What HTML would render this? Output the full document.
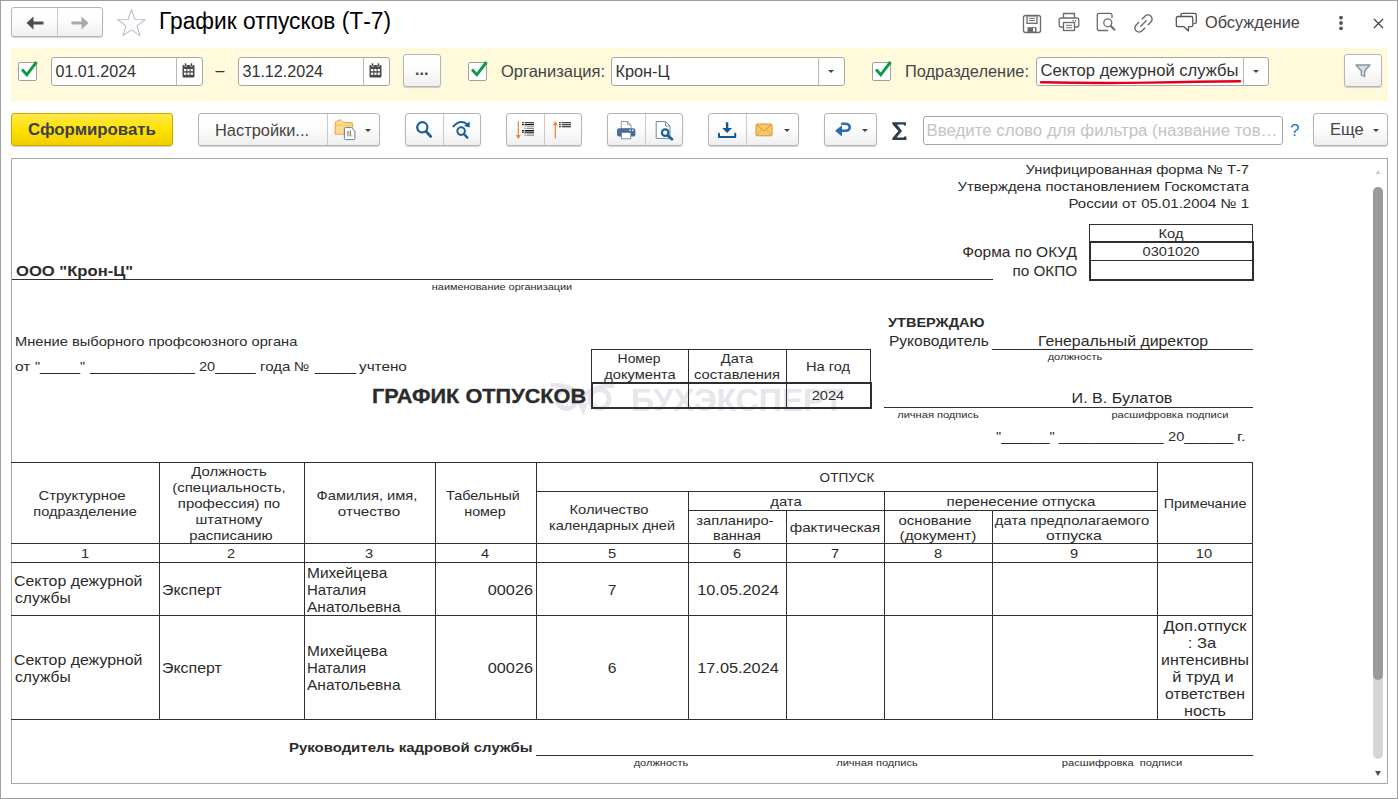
<!DOCTYPE html>
<html lang="ru">
<head>
<meta charset="utf-8">
<title>График отпусков (Т-7)</title>
<style>
*{box-sizing:border-box;margin:0;padding:0}
html,body{width:1398px;height:799px;overflow:hidden;background:#fff}
body{position:relative;font-family:"Liberation Sans",sans-serif;font-size:16.3px;color:#333}
.abs,.btn,.inp,.cb,.t,.hl,.vl,svg.i{position:absolute}
.win{left:0;top:0;width:1398px;height:799px;border:1px solid #9e9e9e}
.t{white-space:pre;line-height:1}
.btn{border:1px solid #b5b5b5;border-radius:3px;background:linear-gradient(#ffffff 0%,#fdfdfd 45%,#efefef 100%);box-shadow:0 1px 1px rgba(0,0,0,.18)}
.btn .dv{position:absolute;top:0;bottom:0;width:1px;background:#c9c9c9}
.inp{border:1px solid #a6a6a6;border-radius:3px;background:#fff}
.inp .dv{position:absolute;top:0;bottom:0;width:1px;background:#b9b9b9}
.cb{width:19px;height:19px;border:1px solid #a0a0a0;border-radius:2px;background:#fff}
.arr{position:absolute;width:0;height:0;border-left:3px solid transparent;border-right:3px solid transparent;border-top:3px solid #444}
.band{left:11px;top:48px;width:1377px;height:54px;background:#fffadc}
.hl{height:1px;background:#2a2a2a}
.vl{width:1px;background:#2a2a2a}
.d{position:absolute;white-space:pre;color:#2b2b2b;line-height:1}
.c{text-align:center}
.r{text-align:right}
</style>
</head>
<body>
<div class="abs win"></div>

<!-- ===== title bar ===== -->
<div class="btn" style="left:11px;top:7px;width:92px;height:30px">
  <div class="dv" style="left:45px"></div>
  <svg class="i" style="left:14px;top:8px" width="18" height="14" viewBox="0 0 18 14"><path d="M0.5 7 L7.5 0.6 V5.5 H17.5 V8.5 H7.5 V13.4 Z" fill="#4d4d4d"/></svg>
  <svg class="i" style="left:59px;top:8px" width="18" height="14" viewBox="0 0 18 14"><path d="M17.5 7 L10.5 0.6 V5.5 H0.5 V8.5 H10.5 V13.4 Z" fill="#a9a9a9"/></svg>
</div>
<svg class="i" style="left:116px;top:7.5px" width="31" height="29.5" viewBox="0 0 30 28"><path d="M15 1.5 L18.3 10.8 L28.2 11 L20.3 17 L23.2 26.4 L15 20.8 L6.8 26.4 L9.7 17 L1.8 11 L11.7 10.8 Z" fill="#fff" stroke="#b3bcc6" stroke-width="1"/></svg>
<div class="t" style="left:158.5px;top:10px;font-size:23.3px;color:#000;transform:scaleX(.977);transform-origin:0 0">График отпусков (Т-7)</div>

<!-- right icons -->
<svg class="i" style="left:1021.5px;top:14px" width="20" height="20" viewBox="0 0 20 20" fill="none" stroke="#6b6b6b" stroke-width="1.3"><path d="M1.5 3.5 Q1.5 1.5 3.5 1.5 H16.5 Q18.5 1.5 18.5 3.5 V16.5 Q18.5 18.5 16.5 18.5 H3.5 Q1.5 18.5 1.5 16.5 Z"/><rect x="5" y="1.8" width="10" height="7.5"/><path d="M7 4.3 H13 M7 6.6 H13" stroke-width="1"/><rect x="5.5" y="13.2" width="9" height="5.2" fill="#6b6b6b" stroke="none"/><rect x="11" y="14.2" width="2" height="3.2" fill="#fff" stroke="none"/></svg>
<svg class="i" style="left:1058px;top:12px" width="22" height="20" viewBox="0 0 22 20" fill="none" stroke="#6b6b6b" stroke-width="1.3"><path d="M5.5 6 V1.5 H16.5 V6"/><path d="M5.5 15 H3.2 Q1.2 15 1.2 13 V8 Q1.2 6 3.2 6 H18.8 Q20.8 6 20.8 8 V13 Q20.8 15 18.8 15 H16.5"/><rect x="5.5" y="10.5" width="11" height="8"/><path d="M8 13.3 H14 M8 15.8 H14" stroke-width="1"/><circle cx="17.6" cy="8.7" r="0.8" fill="#6b6b6b" stroke="none"/><circle cx="15.2" cy="8.7" r="0.8" fill="#6b6b6b" stroke="none"/></svg>
<svg class="i" style="left:1096px;top:12px" width="21" height="21" viewBox="0 0 21 21" fill="none" stroke="#6b6b6b" stroke-width="1.3"><path d="M12 18.5 H3 Q1.3 18.5 1.3 16.8 V3 Q1.3 1.3 3 1.3 H14.3 Q16 1.3 16 3 V6"/><circle cx="11.8" cy="10.8" r="4"/><path d="M14.6 13.8 L19 18.3" stroke-width="2"/></svg>
<svg class="i" style="left:1132px;top:12px" width="23" height="23" viewBox="0 0 23 23" fill="none" stroke="#6b6b6b" stroke-width="1.4" stroke-linecap="round"><g transform="rotate(-45 11.5 11.5)"><path d="M9.2 7.3 H5.3 A4.2 4.2 0 0 0 5.3 15.7 H9.2"/><path d="M13.8 7.3 H17.7 A4.2 4.2 0 0 1 17.7 15.7 H13.8"/><path d="M7.6 11.5 H15.4"/></g></svg>
<svg class="i" style="left:1175px;top:12px" width="23" height="21" viewBox="0 0 23 21" fill="none" stroke="#555" stroke-width="1.3" stroke-linejoin="round"><path d="M6 4 V3 Q6 1.3 7.7 1.3 H19.5 Q21.3 1.3 21.3 3 V10 Q21.3 11.7 19.5 11.7 H18.5"/><path d="M3 4.5 H16 Q17.8 4.5 17.8 6.2 V13 Q17.8 14.7 16 14.7 H13.5 L13.5 19 L9 14.7 H3 Q1.3 14.7 1.3 13 V6.2 Q1.3 4.5 3 4.5 Z"/></svg>
<div class="t" style="left:1205px;top:14px;font-size:16.3px;color:#444">Обсуждение</div>
<svg class="i" style="left:1338px;top:15px" width="6" height="16" viewBox="0 0 6 16" fill="#555"><circle cx="3" cy="2.7" r="1.9"/><circle cx="3" cy="8" r="1.9"/><circle cx="3" cy="13.3" r="1.9"/></svg>
<svg class="i" style="left:1373px;top:18px" width="11" height="11" viewBox="0 0 11 11" stroke="#444" stroke-width="1.3"><path d="M1 1 L10 10 M10 1 L1 10"/></svg>

<!-- ===== filter band ===== -->
<div class="abs band"></div>
<div class="cb" style="left:18px;top:62px"></div>
<svg class="i" style="left:20px;top:60px" width="18" height="18" viewBox="0 0 18 18" fill="none" stroke="#0a9a4a" stroke-width="2.9"><path d="M2 9.5 L6.8 14.8 L16.5 2"/></svg>
<div class="inp" style="left:51px;top:57px;width:152px;height:29px"><div class="dv" style="left:124px"></div></div>
<div class="t" style="left:55.5px;top:63px;font-size:16.1px">01.01.2024</div>
<svg class="i cal" style="left:182px;top:63px" width="13" height="15" viewBox="0 0 13 15"><path d="M0.5 3 Q0.5 2 1.5 2 H11.5 Q12.5 2 12.5 3 V13.5 Q12.5 14.5 11.5 14.5 H1.5 Q0.5 14.5 0.5 13.5 Z" fill="#4a4a4a"/><rect x="2.5" y="0" width="2.2" height="3.6" rx="1" fill="#4a4a4a" stroke="#fdfdfd" stroke-width=".6"/><rect x="8.3" y="0" width="2.2" height="3.6" rx="1" fill="#4a4a4a" stroke="#fdfdfd" stroke-width=".6"/><g fill="#fff"><rect x="2" y="6" width="2.3" height="2.2"/><rect x="5.3" y="6" width="2.3" height="2.2"/><rect x="8.6" y="6" width="2.3" height="2.2"/><rect x="2" y="9.6" width="2.3" height="2.2"/><rect x="5.3" y="9.6" width="2.3" height="2.2"/><rect x="8.6" y="9.6" width="2.3" height="2.2"/></g></svg>
<div class="t" style="left:215.5px;top:63px;font-size:16px">–</div>
<div class="inp" style="left:238px;top:57px;width:152px;height:29px"><div class="dv" style="left:124px"></div></div>
<div class="t" style="left:242.5px;top:63px;font-size:16.1px">31.12.2024</div>
<svg class="i cal" style="left:369px;top:63px" width="13" height="15" viewBox="0 0 13 15"><path d="M0.5 3 Q0.5 2 1.5 2 H11.5 Q12.5 2 12.5 3 V13.5 Q12.5 14.5 11.5 14.5 H1.5 Q0.5 14.5 0.5 13.5 Z" fill="#4a4a4a"/><rect x="2.5" y="0" width="2.2" height="3.6" rx="1" fill="#4a4a4a" stroke="#fdfdfd" stroke-width=".6"/><rect x="8.3" y="0" width="2.2" height="3.6" rx="1" fill="#4a4a4a" stroke="#fdfdfd" stroke-width=".6"/><g fill="#fff"><rect x="2" y="6" width="2.3" height="2.2"/><rect x="5.3" y="6" width="2.3" height="2.2"/><rect x="8.6" y="6" width="2.3" height="2.2"/><rect x="2" y="9.6" width="2.3" height="2.2"/><rect x="5.3" y="9.6" width="2.3" height="2.2"/><rect x="8.6" y="9.6" width="2.3" height="2.2"/></g></svg>
<div class="btn" style="left:403px;top:54px;width:38px;height:33px"></div>
<div class="t" style="left:415px;top:62px;font-size:16px;font-weight:bold;color:#444">...</div>

<div class="cb" style="left:468px;top:62px"></div>
<svg class="i" style="left:470px;top:60px" width="18" height="18" viewBox="0 0 18 18" fill="none" stroke="#0a9a4a" stroke-width="2.9"><path d="M2 9.5 L6.8 14.8 L16.5 2"/></svg>
<div class="t" style="left:501px;top:63px;font-size:16.5px;color:#444">Организация:</div>
<div class="inp" style="left:611px;top:57px;width:234px;height:29px"><div class="dv" style="left:206px"></div><div class="arr" style="left:216px;top:12px"></div></div>
<div class="t" style="left:615.5px;top:63px;font-size:16.3px">Крон-Ц</div>

<div class="cb" style="left:872px;top:62px"></div>
<svg class="i" style="left:874px;top:60px" width="18" height="18" viewBox="0 0 18 18" fill="none" stroke="#0a9a4a" stroke-width="2.9"><path d="M2 9.5 L6.8 14.8 L16.5 2"/></svg>
<div class="t" style="left:905px;top:63px;font-size:16.4px;color:#444">Подразделение:</div>
<div class="inp" style="left:1036px;top:57px;width:233px;height:29px"><div class="dv" style="left:206px"></div><div class="arr" style="left:216px;top:12px"></div></div>
<div class="t" style="left:1040.5px;top:63px;font-size:16.6px">Сектор дежурной службы</div>
<svg class="i" style="left:1038px;top:78px" width="206" height="8" viewBox="0 0 206 8" fill="none" stroke="#e3001b" stroke-width="2.4" stroke-linecap="round"><path d="M3 4.2 Q60 5.6 110 4.6 T202 3.2"/></svg>
<div class="btn" style="left:1344px;top:54px;width:38px;height:33px"></div>
<svg class="i" style="left:1355px;top:64px" width="16" height="14" viewBox="0 0 16 14" fill="#d3dae0" stroke="#8593a0" stroke-width="1.3" stroke-linejoin="round"><path d="M1 1 H15 L9.7 7 V12.5 L6.3 11 V7 Z"/></svg>

<!-- ===== toolbar ===== -->
<div class="btn" style="left:11px;top:113px;width:162px;height:33px;background:linear-gradient(#ffe94d 0%,#ffe100 50%,#f2cf00 100%);border-color:#c9a800"></div>
<div class="t" style="left:28px;top:122px;font-size:16.8px;font-weight:bold;color:#3c3f50">Сформировать</div>

<div class="btn" style="left:198px;top:113px;width:182px;height:33px"><div class="dv" style="left:128px"></div><div class="arr" style="left:166px;top:15px"></div></div>
<div class="t" style="left:215px;top:121.6px;font-size:16.4px;color:#444">Настройки...</div>

<div class="btn" style="left:405px;top:113px;width:76px;height:33px"><div class="dv" style="left:37px"></div></div>
<div class="btn" style="left:506px;top:113px;width:76px;height:33px"><div class="dv" style="left:37px"></div></div>
<div class="btn" style="left:607px;top:113px;width:76px;height:33px"><div class="dv" style="left:37px"></div></div>
<div class="btn" style="left:708px;top:113px;width:91px;height:33px"><div class="dv" style="left:37px"></div><div class="arr" style="left:75px;top:15px"></div></div>
<div class="btn" style="left:824px;top:113px;width:53px;height:33px"><div class="arr" style="left:37px;top:15px"></div></div>
<!-- folder+report icon -->
<svg class="i" style="left:334px;top:119px" width="23" height="22" viewBox="0 0 23 22"><path d="M1.2 4.2 Q1.2 2.2 3 2 L5.2 1 Q6.2 .6 7 1.3 L9.2 3.6 H17.4 Q18.6 3.6 18.6 4.8 V15.2 H1.2 Z" fill="#fbdc8a" stroke="#e0a64a" stroke-width="1"/><path d="M1.7 6.3 H18.2" stroke="#f1c469" stroke-width="1"/><path d="M10.4 9.6 Q10.4 8.6 11.4 8.6 H17.4 L20.9 12 V19.6 Q20.9 20.6 19.9 20.6 H11.4 Q10.4 20.6 10.4 19.6 Z" fill="#fff" stroke="#647e99" stroke-width="1"/><path d="M14 12 V16.3" stroke="#e23b2e" stroke-width="1.1"/><path d="M16.4 11.6 V16.3" stroke="#2e9e3e" stroke-width="1.1"/><path d="M12.6 16.8 H18.6" stroke="#8a8a8a" stroke-width=".8"/></svg>
<!-- magnifier -->
<svg class="i" style="left:414px;top:119px" width="20" height="20" viewBox="0 0 20 20" fill="none" stroke="#1c5f95" stroke-linecap="round"><circle cx="8.3" cy="8.3" r="5.1" stroke-width="2.2"/><path d="M12.3 12.6 L16.6 17.4" stroke-width="2.9"/></svg>
<!-- magnifier with arrow -->
<svg class="i" style="left:451px;top:119px" width="21" height="21" viewBox="0 0 21 21" fill="none" stroke="#1c5f95" stroke-linecap="round"><circle cx="10.1" cy="12.1" r="3.8" stroke-width="2"/><path d="M12.9 15 L16.3 18.6" stroke-width="2.5"/><path d="M2.4 7.4 Q9 -0.2 16.2 5.2" stroke-width="2"/><path d="M18.9 2.6 L18.6 8.4 L13 7 Z" fill="#1c5f95" stroke="none"/></svg>
<!-- expand list -->
<svg class="i" style="left:514px;top:120px" width="22" height="20" viewBox="0 0 22 20"><path d="M4.3 1.2 V17" stroke="#f0803c" stroke-width="1.2"/><path d="M1.7 15 H6.9 L4.3 19 Z" fill="#f0803c"/><g stroke="#111" stroke-width="1.1"><path d="M8 2.7 H9.8 M10.6 2.7 H20"/><path d="M8 4.6 H9.8 M10.6 4.6 H20"/><path d="M8 10.5 H9.8 M10.6 10.5 H20"/><path d="M8 12.1 H9.8 M10.6 12.1 H20"/></g><g stroke="#8a8a8a" stroke-width="1"><path d="M10.4 6.8 H11.8 M12.6 6.8 H20"/><path d="M10.4 8.5 H11.8 M12.6 8.5 H20"/><path d="M10.4 13.8 H11.8 M12.6 13.8 H20"/><path d="M10.4 15.3 H11.8 M12.6 15.3 H20"/></g></svg>
<!-- collapse list -->
<svg class="i" style="left:551px;top:120px" width="22" height="20" viewBox="0 0 22 20"><path d="M4.3 3 V18.6" stroke="#f0803c" stroke-width="1.2"/><path d="M1.7 5.2 H6.9 L4.3 1.2 Z" fill="#f0803c"/><g stroke="#111" stroke-width="1.1"><path d="M8 2.7 H9.8 M10.6 2.7 H20"/><path d="M8 4.7 H9.8 M10.6 4.7 H20"/><path d="M8 6.7 H9.8 M10.6 6.7 H20"/></g></svg>
<!-- printer -->
<svg class="i" style="left:616px;top:120px" width="21" height="20" viewBox="0 0 21 20"><path d="M5.3 9 V1.5 H11.6 L15 4.8 V9 Z" fill="#fff" stroke="#8c9bab" stroke-width="1"/><path d="M11.6 1.5 V4.8 H15" fill="none" stroke="#8c9bab" stroke-width="1"/><path d="M1 10.4 Q1 8.2 3.2 8.2 H17.2 Q19.4 8.2 19.4 10.4 V14.6 Q19.4 16.6 17.4 16.6 H3 Q1 16.6 1 14.6 Z" fill="#4a6d96"/><rect x="5.4" y="12.4" width="9.4" height="6.4" fill="#fff" stroke="#5d7b9e" stroke-width=".8"/><rect x="13.4" y="9.6" width="1.5" height="1.3" fill="#fff"/><rect x="16" y="9.6" width="1.5" height="1.3" fill="#fff"/></svg>
<!-- preview -->
<svg class="i" style="left:655px;top:120px" width="20" height="21" viewBox="0 0 20 21"><path d="M1.2 1.6 H10.6 L15 6 V18.4 H1.2 Z" fill="#fff" stroke="#6f88a3" stroke-width="1"/><path d="M10.6 1.6 V6 H15" fill="none" stroke="#6f88a3" stroke-width="1"/><circle cx="10.2" cy="12.6" r="3.3" fill="#fff" stroke="#1c5f95" stroke-width="2.2"/><path d="M12.8 15.4 L17 19.2" stroke="#1c5f95" stroke-width="2.7" stroke-linecap="round"/></svg>
<!-- download -->
<svg class="i" style="left:717px;top:121px" width="20" height="19" viewBox="0 0 20 19" fill="none" stroke="#0f5a96"><path d="M10.1 1.2 V9" stroke-width="2.4"/><path d="M5.2 7 H15 L10.1 12 Z" fill="#0f5a96" stroke="none"/><path d="M2 12.8 V16 H18.2 V12.8" stroke-width="2" stroke-linejoin="round" stroke-linecap="round"/></svg>
<!-- mail -->
<svg class="i" style="left:755px;top:123px" width="18" height="14" viewBox="0 0 18 14"><rect x="1" y="1" width="16" height="11.8" rx="1.2" fill="#f6c76d" stroke="#d6952a" stroke-width="1"/><path d="M1.6 1.6 L9 8 L16.4 1.6" fill="none" stroke="#d6952a" stroke-width="1"/><path d="M1.6 12.2 L6.8 6.4 M16.4 12.2 L11.2 6.4" stroke="#dfa443" stroke-width=".9"/></svg>
<!-- return arrow -->
<svg class="i" style="left:834px;top:121px" width="19" height="17" viewBox="0 0 19 17" fill="none"><path d="M8.2 2.7 H11 Q15.7 2.7 15.7 6.3 Q15.7 9.8 11.4 9.8 H6.5" stroke="#2a6cb0" stroke-width="2.6" stroke-linecap="round"/><path d="M1 9.8 L8 4.2 V15.4 Z" fill="#2a6cb0"/></svg>
<!-- sigma -->
<svg class="i" style="left:891px;top:121px" width="17" height="20" viewBox="0 0 17 20"><path d="M1.4 1.2 H15 V4.6 H12.8 V3.6 H6 L11 10 L5.6 16.6 H13 V15.4 H15.4 V19 H1.4 V17 L7.4 10 L1.4 3.2 Z" fill="#2c3e50"/></svg>


<div class="inp" style="left:923px;top:116px;width:360px;height:29px"></div>
<div class="t" style="left:926.5px;top:123px;font-size:16.85px;color:#c3c3c3">Введите слово для фильтра (название тов…</div>
<div class="t" style="left:1290px;top:121.6px;font-size:17px;color:#1a76c6">?</div>
<div class="btn" style="left:1313px;top:113px;width:75px;height:33px"><div class="arr" style="left:59px;top:15px"></div></div>
<div class="t" style="left:1330px;top:122px;font-size:16.6px;color:#444">Еще</div>

<!-- ===== document frame ===== -->
<div class="abs" style="left:11px;top:158px;width:1377px;height:626px;border:1px solid #a8a8a8;background:#fff"></div>
<!--DOC-->
<div class="d" style="left:631px;top:384.3px;font-size:32px;font-weight:bold;color:#e6e6ec">БУХЭКСПЕРТ</div>
<svg class="i" style="left:548px;top:380px" width="70" height="40" viewBox="0 0 70 40" fill="none" stroke="#e6e6ec" stroke-width="5"><circle cx="18.5" cy="19" r="9.5"/><circle cx="51.5" cy="19" r="9.5"/><path d="M3 5 Q20 4 35 16 Q50 4 66 6" stroke-width="4.5"/><path d="M30 23 L40 23 L35 36 Z" fill="#e6e6ec" stroke="none"/></svg>
<div class="d" style="top:163.00px;font-size:13px;left:649.10px;width:600px;text-align:right;transform-origin:100% 0;transform:scaleX(1.1313);">Унифицированная форма № Т-7</div>
<div class="d" style="top:180.00px;font-size:13px;left:649.10px;width:600px;text-align:right;transform-origin:100% 0;transform:scaleX(1.1430);">Утверждена постановлением Госкомстата</div>
<div class="d" style="top:197.00px;font-size:13px;left:649.10px;width:600px;text-align:right;transform-origin:100% 0;transform:scaleX(1.1537);">России от 05.01.2004 № 1</div>
<div class="abs" style="left:1089px;top:224px;width:164px;height:18px;border:1px solid #2e2e2e"></div>
<div class="abs" style="left:1089px;top:241px;width:165px;height:40px;border:2px solid #2e2e2e"></div>
<div class="abs" style="left:1090px;top:260px;width:163px;height:1px;background:#2e2e2e"></div>
<div class="d" style="top:226.50px;font-size:13px;left:871.00px;width:600px;text-align:center;transform-origin:50% 0;transform:scaleX(1.1250);">Код</div>
<div class="d" style="top:245.00px;font-size:13px;left:871.00px;width:600px;text-align:center;transform-origin:50% 0;transform:scaleX(1.1250);">0301020</div>
<div class="d" style="top:244.81px;font-size:14.4px;left:477.00px;width:600px;text-align:right;transform-origin:100% 0;transform:scaleX(1.0767);">Форма по ОКУД</div>
<div class="d" style="top:263.81px;font-size:14.4px;left:477.00px;width:600px;text-align:right;transform-origin:100% 0;transform:scaleX(1.0587);">по ОКПО</div>
<div class="d" style="top:264.11px;font-size:14.4px;font-weight:bold;left:15.50px;transform-origin:0 0;transform:scaleX(1.1536);">ООО "Крон-Ц"</div>
<div class="abs" style="left:12px;top:279px;width:981px;height:1px;background:#2e2e2e"></div>
<div class="d" style="top:281.96px;font-size:9.5px;left:202.00px;width:600px;text-align:center;transform-origin:50% 0;transform:scaleX(1.1478);">наименование организации</div>
<div class="d" style="top:335.30px;font-size:13px;left:14.70px;transform-origin:0 0;transform:scaleX(1.1272);">Мнение выборного профсоюзного органа</div>
<div class="d" style="top:360.30px;font-size:13px;left:14.70px;transform-origin:0 0;transform:scaleX(1.2010);">от</div>
<div class="d" style="top:360.30px;font-size:13px;left:35.00px;transform-origin:0 0;transform:scaleX(1.1060);">"_____"</div>
<div class="d" style="top:360.30px;font-size:13px;left:89.70px;transform-origin:0 0;transform:scaleX(1.1149);">_____________</div>
<div class="d" style="top:360.30px;font-size:13px;left:198.50px;transform-origin:0 0;transform:scaleX(1.1200);">20_____</div>
<div class="d" style="top:360.30px;font-size:13px;left:259.70px;transform-origin:0 0;transform:scaleX(1.1557);">года</div>
<div class="d" style="top:360.30px;font-size:13px;left:294.20px;transform-origin:0 0;transform:scaleX(1.0965);">№</div>
<div class="d" style="top:360.30px;font-size:13px;left:314.70px;transform-origin:0 0;transform:scaleX(1.1340);">_____</div>
<div class="d" style="top:360.30px;font-size:13px;left:359.20px;transform-origin:0 0;transform:scaleX(1.1735);">учтено</div>
<div class="d" style="top:387.16px;font-size:19.3px;font-weight:bold;left:371.60px;transform-origin:0 0;transform:scaleX(1.1255);-webkit-text-stroke:0.3px #2b2b2b">ГРАФИК ОТПУСКОВ</div>
<div class="abs" style="left:591px;top:349px;width:280px;height:34px;border:1px solid #2e2e2e"></div>
<div class="abs" style="left:688px;top:349px;width:1px;height:34px;background:#2e2e2e"></div>
<div class="abs" style="left:786px;top:349px;width:1px;height:34px;background:#2e2e2e"></div>
<div class="abs" style="left:591px;top:382px;width:281px;height:27px;border:2px solid #2e2e2e"></div>
<div class="abs" style="left:688px;top:383px;width:1px;height:25px;background:#2e2e2e"></div>
<div class="abs" style="left:786px;top:383px;width:1px;height:25px;background:#2e2e2e"></div>
<div class="d" style="top:351.60px;font-size:13px;left:339.30px;width:600px;text-align:center;transform-origin:50% 0;transform:scaleX(1.0683);">Номер</div>
<div class="d" style="top:367.60px;font-size:13px;left:339.50px;width:600px;text-align:center;transform-origin:50% 0;transform:scaleX(1.1250);">документа</div>
<div class="d" style="top:351.60px;font-size:13px;left:437.00px;width:600px;text-align:center;transform-origin:50% 0;transform:scaleX(1.1250);">Дата</div>
<div class="d" style="top:367.60px;font-size:13px;left:437.00px;width:600px;text-align:center;transform-origin:50% 0;transform:scaleX(1.1250);">составления</div>
<div class="d" style="top:360.30px;font-size:13px;left:528.00px;width:600px;text-align:center;transform-origin:50% 0;transform:scaleX(1.1250);">На год</div>
<div class="d" style="top:389.30px;font-size:13px;left:528.00px;width:600px;text-align:center;transform-origin:50% 0;transform:scaleX(1.1250);">2024</div>
<div class="d" style="top:316.20px;font-size:13px;font-weight:bold;left:887.80px;transform-origin:0 0;transform:scaleX(1.1168);">УТВЕРЖДАЮ</div>
<div class="d" style="top:334.11px;font-size:14.4px;left:888.70px;transform-origin:0 0;transform:scaleX(1.0775);">Руководитель</div>
<div class="d" style="top:334.11px;font-size:14.4px;left:822.50px;width:600px;text-align:center;transform-origin:50% 0;transform:scaleX(1.1020);">Генеральный директор</div>
<div class="abs" style="left:992px;top:349px;width:261px;height:1px;background:#2e2e2e"></div>
<div class="d" style="top:351.96px;font-size:9.5px;left:774.60px;width:600px;text-align:center;transform-origin:50% 0;transform:scaleX(1.1611);">должность</div>
<div class="d" style="top:391.41px;font-size:14.4px;left:822.20px;width:600px;text-align:center;transform-origin:50% 0;transform:scaleX(1.1186);">И. В. Булатов</div>
<div class="abs" style="left:884px;top:407px;width:369px;height:1px;background:#2e2e2e"></div>
<div class="d" style="top:409.96px;font-size:9.5px;left:637.80px;width:600px;text-align:center;transform-origin:50% 0;transform:scaleX(1.1652);">личная подпись</div>
<div class="d" style="top:409.96px;font-size:9.5px;left:870.40px;width:600px;text-align:center;transform-origin:50% 0;transform:scaleX(1.1683);">расшифровка подписи</div>
<div class="d" style="top:430.00px;font-size:13px;left:996.00px;transform-origin:0 0;transform:scaleX(1.1158);">"______"</div>
<div class="d" style="top:430.00px;font-size:13px;left:1058.60px;transform-origin:0 0;transform:scaleX(1.1117);">_____________</div>
<div class="d" style="top:430.00px;font-size:13px;left:1167.60px;transform-origin:0 0;transform:scaleX(1.1254);">20______</div>
<div class="d" style="top:430.00px;font-size:13px;left:1237.20px;transform-origin:0 0;transform:scaleX(1.2500);">г.</div>
<div class="abs" style="left:11px;top:462px;width:1242px;height:1px;background:#2e2e2e"></div>
<div class="abs" style="left:11px;top:543px;width:1242px;height:1px;background:#2e2e2e"></div>
<div class="abs" style="left:11px;top:562px;width:1242px;height:1px;background:#2e2e2e"></div>
<div class="abs" style="left:11px;top:615px;width:1242px;height:1px;background:#2e2e2e"></div>
<div class="abs" style="left:11px;top:719px;width:1242px;height:1px;background:#2e2e2e"></div>
<div class="abs" style="left:536px;top:491px;width:622px;height:1px;background:#2e2e2e"></div>
<div class="abs" style="left:688px;top:510px;width:470px;height:1px;background:#2e2e2e"></div>
<div class="abs" style="left:159px;top:462px;width:1px;height:258px;background:#2e2e2e"></div>
<div class="abs" style="left:304px;top:462px;width:1px;height:258px;background:#2e2e2e"></div>
<div class="abs" style="left:435px;top:462px;width:1px;height:258px;background:#2e2e2e"></div>
<div class="abs" style="left:536px;top:462px;width:1px;height:258px;background:#2e2e2e"></div>
<div class="abs" style="left:1157px;top:462px;width:1px;height:258px;background:#2e2e2e"></div>
<div class="abs" style="left:1252px;top:462px;width:1px;height:258px;background:#2e2e2e"></div>
<div class="abs" style="left:688px;top:491px;width:1px;height:229px;background:#2e2e2e"></div>
<div class="abs" style="left:884px;top:491px;width:1px;height:229px;background:#2e2e2e"></div>
<div class="abs" style="left:786px;top:510px;width:1px;height:210px;background:#2e2e2e"></div>
<div class="abs" style="left:992px;top:510px;width:1px;height:210px;background:#2e2e2e"></div>
<div class="d" style="top:489.00px;font-size:13px;left:-217.90px;width:600px;text-align:center;transform-origin:50% 0;transform:scaleX(1.1460);">Структурное</div>
<div class="d" style="top:505.00px;font-size:13px;left:-215.10px;width:600px;text-align:center;transform-origin:50% 0;transform:scaleX(1.1197);">подразделение</div>
<div class="d" style="top:464.60px;font-size:13px;left:-70.80px;width:600px;text-align:center;transform-origin:50% 0;transform:scaleX(1.1442);">Должность</div>
<div class="d" style="top:480.60px;font-size:13px;left:-70.80px;width:600px;text-align:center;transform-origin:50% 0;transform:scaleX(1.1484);">(специальность,</div>
<div class="d" style="top:496.60px;font-size:13px;left:-70.80px;width:600px;text-align:center;transform-origin:50% 0;transform:scaleX(1.1502);">профессия) по</div>
<div class="d" style="top:512.60px;font-size:13px;left:-70.80px;width:600px;text-align:center;transform-origin:50% 0;transform:scaleX(1.1329);">штатному</div>
<div class="d" style="top:528.60px;font-size:13px;left:-68.60px;width:600px;text-align:center;transform-origin:50% 0;transform:scaleX(1.1409);">расписанию</div>
<div class="d" style="top:489.00px;font-size:13px;left:66.60px;width:600px;text-align:center;transform-origin:50% 0;transform:scaleX(1.1290);">Фамилия, имя,</div>
<div class="d" style="top:505.00px;font-size:13px;left:69.40px;width:600px;text-align:center;transform-origin:50% 0;transform:scaleX(1.1676);">отчество</div>
<div class="d" style="top:489.00px;font-size:13px;left:182.60px;width:600px;text-align:center;transform-origin:50% 0;transform:scaleX(1.1043);">Табельный</div>
<div class="d" style="top:505.00px;font-size:13px;left:185.40px;width:600px;text-align:center;transform-origin:50% 0;transform:scaleX(1.0975);">номер</div>
<div class="d" style="top:471.00px;font-size:13px;left:547.00px;width:600px;text-align:center;transform-origin:50% 0;transform:scaleX(1.0413);">ОТПУСК</div>
<div class="d" style="top:503.00px;font-size:13px;left:309.10px;width:600px;text-align:center;transform-origin:50% 0;transform:scaleX(1.1316);">Количество</div>
<div class="d" style="top:519.00px;font-size:13px;left:311.90px;width:600px;text-align:center;transform-origin:50% 0;transform:scaleX(1.1137);">календарных дней</div>
<div class="d" style="top:494.50px;font-size:13px;left:485.90px;width:600px;text-align:center;transform-origin:50% 0;transform:scaleX(1.1422);">дата</div>
<div class="d" style="top:513.50px;font-size:13px;left:435.30px;width:600px;text-align:center;transform-origin:50% 0;transform:scaleX(1.1321);">запланиро-</div>
<div class="d" style="top:529.00px;font-size:13px;left:436.50px;width:600px;text-align:center;transform-origin:50% 0;transform:scaleX(1.1214);">ванная</div>
<div class="d" style="top:520.50px;font-size:13px;left:535.00px;width:600px;text-align:center;transform-origin:50% 0;transform:scaleX(1.1642);">фактическая</div>
<div class="d" style="top:494.50px;font-size:13px;left:721.00px;width:600px;text-align:center;transform-origin:50% 0;transform:scaleX(1.1611);">перенесение отпуска</div>
<div class="d" style="top:513.50px;font-size:13px;left:635.10px;width:600px;text-align:center;transform-origin:50% 0;transform:scaleX(1.1408);">основание</div>
<div class="d" style="top:529.00px;font-size:13px;left:637.75px;width:600px;text-align:center;transform-origin:50% 0;transform:scaleX(1.1852);">(документ)</div>
<div class="d" style="top:513.50px;font-size:13px;left:771.90px;width:600px;text-align:center;transform-origin:50% 0;transform:scaleX(1.1382);">дата предполагаемого</div>
<div class="d" style="top:529.00px;font-size:13px;left:774.10px;width:600px;text-align:center;transform-origin:50% 0;transform:scaleX(1.2120);">отпуска</div>
<div class="d" style="top:497.00px;font-size:13px;left:905.00px;width:600px;text-align:center;transform-origin:50% 0;transform:scaleX(1.0990);">Примечание</div>
<div class="d" style="top:547.00px;font-size:13px;left:-215.40px;width:600px;text-align:center;transform-origin:50% 0;transform:scaleX(1.1250);">1</div>
<div class="d" style="top:547.00px;font-size:13px;left:-68.90px;width:600px;text-align:center;transform-origin:50% 0;transform:scaleX(1.1250);">2</div>
<div class="d" style="top:547.00px;font-size:13px;left:69.10px;width:600px;text-align:center;transform-origin:50% 0;transform:scaleX(1.1250);">3</div>
<div class="d" style="top:547.00px;font-size:13px;left:185.10px;width:600px;text-align:center;transform-origin:50% 0;transform:scaleX(1.1250);">4</div>
<div class="d" style="top:547.00px;font-size:13px;left:311.60px;width:600px;text-align:center;transform-origin:50% 0;transform:scaleX(1.1250);">5</div>
<div class="d" style="top:547.00px;font-size:13px;left:436.60px;width:600px;text-align:center;transform-origin:50% 0;transform:scaleX(1.1250);">6</div>
<div class="d" style="top:547.00px;font-size:13px;left:534.60px;width:600px;text-align:center;transform-origin:50% 0;transform:scaleX(1.1250);">7</div>
<div class="d" style="top:547.00px;font-size:13px;left:637.60px;width:600px;text-align:center;transform-origin:50% 0;transform:scaleX(1.1250);">8</div>
<div class="d" style="top:547.00px;font-size:13px;left:774.10px;width:600px;text-align:center;transform-origin:50% 0;transform:scaleX(1.1250);">9</div>
<div class="d" style="top:547.00px;font-size:13px;left:904.10px;width:600px;text-align:center;transform-origin:50% 0;transform:scaleX(1.1250);">10</div>
<div class="d" style="top:574.11px;font-size:14.4px;left:14.40px;transform-origin:0 0;transform:scaleX(1.1045);">Сектор дежурной</div>
<div class="d" style="top:590.81px;font-size:14.4px;left:14.70px;transform-origin:0 0;transform:scaleX(1.0850);">службы</div>
<div class="d" style="top:583.21px;font-size:14.4px;left:161.90px;transform-origin:0 0;transform:scaleX(1.1058);">Эксперт</div>
<div class="d" style="top:566.21px;font-size:14.4px;left:307.20px;transform-origin:0 0;transform:scaleX(1.0745);">Михейцева</div>
<div class="d" style="top:583.11px;font-size:14.4px;left:307.20px;transform-origin:0 0;transform:scaleX(1.0396);">Наталия</div>
<div class="d" style="top:600.01px;font-size:14.4px;left:307.20px;transform-origin:0 0;transform:scaleX(1.0766);">Анатольевна</div>
<div class="d" style="top:583.21px;font-size:14.4px;left:-66.80px;width:600px;text-align:right;transform-origin:100% 0;transform:scaleX(1.1291);">00026</div>
<div class="d" style="top:583.21px;font-size:14.4px;left:311.80px;width:600px;text-align:center;transform-origin:50% 0;transform:scaleX(1.0850);">7</div>
<div class="d" style="top:583.21px;font-size:14.4px;left:437.50px;width:600px;text-align:center;transform-origin:50% 0;transform:scaleX(1.1315);">10.05.2024</div>
<div class="d" style="top:652.81px;font-size:14.4px;left:14.40px;transform-origin:0 0;transform:scaleX(1.1045);">Сектор дежурной</div>
<div class="d" style="top:669.51px;font-size:14.4px;left:14.70px;transform-origin:0 0;transform:scaleX(1.0850);">службы</div>
<div class="d" style="top:661.01px;font-size:14.4px;left:161.90px;transform-origin:0 0;transform:scaleX(1.1058);">Эксперт</div>
<div class="d" style="top:644.01px;font-size:14.4px;left:307.20px;transform-origin:0 0;transform:scaleX(1.0745);">Михейцева</div>
<div class="d" style="top:661.01px;font-size:14.4px;left:307.20px;transform-origin:0 0;transform:scaleX(1.0396);">Наталия</div>
<div class="d" style="top:677.81px;font-size:14.4px;left:307.20px;transform-origin:0 0;transform:scaleX(1.0766);">Анатольевна</div>
<div class="d" style="top:661.01px;font-size:14.4px;left:-66.80px;width:600px;text-align:right;transform-origin:100% 0;transform:scaleX(1.1291);">00026</div>
<div class="d" style="top:661.01px;font-size:14.4px;left:311.80px;width:600px;text-align:center;transform-origin:50% 0;transform:scaleX(1.0850);">6</div>
<div class="d" style="top:661.01px;font-size:14.4px;left:437.50px;width:600px;text-align:center;transform-origin:50% 0;transform:scaleX(1.1315);">17.05.2024</div>
<div class="d" style="top:618.51px;font-size:14.4px;left:904.70px;width:600px;text-align:center;transform-origin:50% 0;transform:scaleX(1.1506);">Доп.отпуск</div>
<div class="d" style="top:635.51px;font-size:14.4px;left:902.10px;width:600px;text-align:center;transform-origin:50% 0;transform:scaleX(1.1537);">: За</div>
<div class="d" style="top:652.51px;font-size:14.4px;left:904.70px;width:600px;text-align:center;transform-origin:50% 0;transform:scaleX(1.1038);">интенсивны</div>
<div class="d" style="top:669.51px;font-size:14.4px;left:902.80px;width:600px;text-align:center;transform-origin:50% 0;transform:scaleX(1.1431);">й труд и</div>
<div class="d" style="top:686.51px;font-size:14.4px;left:904.50px;width:600px;text-align:center;transform-origin:50% 0;transform:scaleX(1.0941);">ответствен</div>
<div class="d" style="top:703.51px;font-size:14.4px;left:904.80px;width:600px;text-align:center;transform-origin:50% 0;transform:scaleX(1.1280);">ность</div>
<div class="d" style="top:740.80px;font-size:13px;font-weight:bold;left:289.20px;transform-origin:0 0;transform:scaleX(1.1499);">Руководитель кадровой службы</div>
<div class="abs" style="left:536px;top:755px;width:717px;height:1px;background:#2e2e2e"></div>
<div class="d" style="top:758.46px;font-size:9.5px;left:360.80px;width:600px;text-align:center;transform-origin:50% 0;transform:scaleX(1.1611);">должность</div>
<div class="d" style="top:758.46px;font-size:9.5px;left:576.80px;width:600px;text-align:center;transform-origin:50% 0;transform:scaleX(1.1652);">личная подпись</div>
<div class="d" style="top:758.46px;font-size:9.5px;left:822.00px;width:600px;text-align:center;transform-origin:50% 0;transform:scaleX(1.1694);">расшифровка  подписи</div>
<div class="abs" style="left:1373px;top:187px;width:10px;height:572px;border-radius:5px;background:#d6d6d6"></div>
<div class="abs" style="left:1373px;top:187px;width:10px;height:493px;border-radius:5px;background:#9a9a9a"></div>
<div class="abs" style="left:1376px;top:170px;width:0;height:0;border-left:2.5px solid transparent;border-right:2.5px solid transparent;border-bottom:4.5px solid #c4c4c4"></div>
<div class="abs" style="left:1375.4px;top:770.6px;width:0;height:0;border-left:3px solid transparent;border-right:3px solid transparent;border-top:5px solid #505050"></div>
<!--/DOC-->
</body>
</html>
